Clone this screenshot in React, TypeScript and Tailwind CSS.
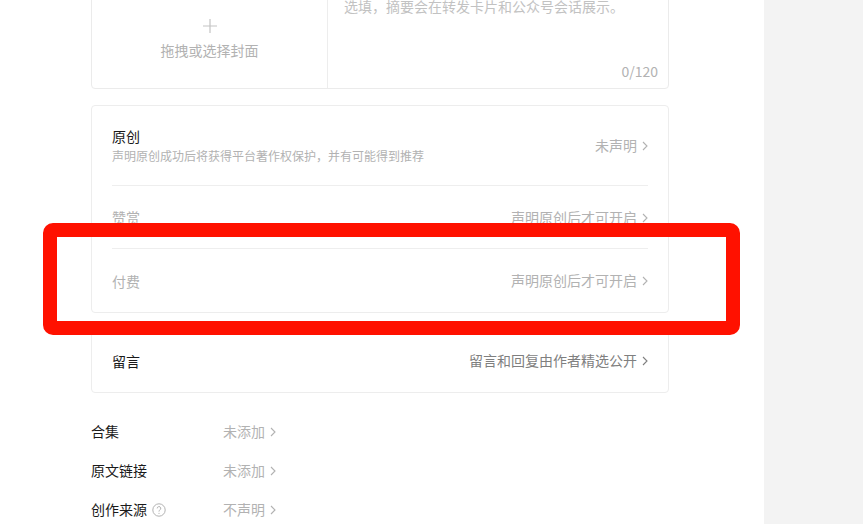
const FONT = '"Noto Sans CJK SC", "Noto Sans", sans-serif';

function Chevron({ className = "" }: { className?: string }) {
  return (
    <svg width="6" height="10" viewBox="0 0 6 10" className={className}>
      <path d="M1 1l4 4-4 4" fill="none" stroke="currentColor" strokeWidth="1.1" />
    </svg>
  );
}

function SettingRow({
  title,
  desc,
  value,
  disabled,
  valueDark,
  height,
}: {
  title: string;
  desc?: string;
  value: string;
  disabled?: boolean;
  valueDark?: boolean;
  height: string;
}) {
  return (
    <div className={`flex items-center justify-between ${height}`}>
      <div className="flex flex-col">
        <span className={`text-[14px] leading-[20px] ${disabled ? "text-[#b2b2b2]" : "text-[#1a1a1a]"}`}>
          {title}
        </span>
        {desc && <span className="text-[12px] leading-[18px] text-[#b2b2b2] mt-[1px]">{desc}</span>}
      </div>
      <div className={`flex items-center gap-[5px] text-[14px] ${valueDark ? "text-[#7f7f7f]" : "text-[#b2b2b2]"}`}>
        <span>{value}</span>
        <Chevron className="mt-[1px]" />
      </div>
    </div>
  );
}

export default function App() {
  return (
    <div className="relative flex w-full h-[524px] overflow-hidden bg-white" style={{ fontFamily: FONT }}>
      <div className="flex-1 bg-white">
        <div className="pl-[91px] w-[669px]">
          {/* Cover + summary */}
          <div className="-mt-[14px] flex h-[103px] border border-[#ebebeb] rounded-[4px]">
            <div className="w-[236px] pt-[2px] border-r border-[#ededed] flex flex-col items-center justify-center">
              <svg width="16" height="16" viewBox="0 0 16 16" className="text-[#c4c4c4]">
                <path d="M8 1v14M1 8h14" stroke="currentColor" strokeWidth="1.2" />
              </svg>
              <span className="mt-[6px] text-[14px] leading-[20px] text-[#b2b2b2]">拖拽或选择封面</span>
            </div>
            <div className="relative flex-1 pl-[16px] pt-[6px]">
              <span className="text-[14px] leading-[22px] text-[#c2c2c2]">选填，摘要会在转发卡片和公众号会话展示。</span>
              <span className="absolute right-[10px] bottom-[6px] text-[14px] leading-[22px] text-[#b2b2b2]">0/120</span>
            </div>
          </div>

          {/* Original / reward / pay */}
          <div className="mt-[16px] border border-[#ededed] rounded-[4px] px-[20px]">
            <SettingRow
              title="原创"
              desc="声明原创成功后将获得平台著作权保护，并有可能得到推荐"
              value="未声明"
              height="h-[79px]"
            />
            <div className="h-px bg-[#eeeeee]" />
            <SettingRow title="赞赏" value="声明原创后才可开启" disabled height="h-[62px]" />
            <div className="h-px bg-[#eeeeee]" />
            <SettingRow title="付费" value="声明原创后才可开启" disabled height="h-[63px]" />
          </div>

          {/* Comments */}
          <div className="mt-[15px] border border-[#ededed] rounded-[4px] px-[20px]">
            <SettingRow title="留言" value="留言和回复由作者精选公开" valueDark height="h-[63px]" />
          </div>

          {/* Plain rows */}
          <div className="mt-[19px] flex flex-col text-[14px]">
            {[
              { label: "合集", value: "未添加" },
              { label: "原文链接", value: "未添加" },
              { label: "创作来源", value: "不声明", help: true },
            ].map((r) => (
              <div key={r.label} className="flex items-center h-[39px]">
                <div className="w-[132px] flex items-center gap-[5px] text-[#1a1a1a]">
                  <span>{r.label}</span>
                  {r.help && (
                    <svg width="14" height="14" viewBox="0 0 14 14" className="text-[#b2b2b2]">
                      <circle cx="7" cy="7" r="6.2" fill="none" stroke="currentColor" strokeWidth="1" />
                      <path
                        d="M5.2 5.4a1.8 1.8 0 1 1 2.6 1.6c-.6.3-.8.6-.8 1.2v.4"
                        fill="none"
                        stroke="currentColor"
                        strokeWidth="1"
                      />
                      <circle cx="7" cy="10.3" r="0.6" fill="currentColor" />
                    </svg>
                  )}
                </div>
                <div className="flex items-center gap-[5px] text-[#b2b2b2]">
                  <span>{r.value}</span>
                  <Chevron className="mt-[1px]" />
                </div>
              </div>
            ))}
          </div>
        </div>
      </div>
      <div className="w-[99px] bg-[#f3f3f3]" />

      {/* Red highlight overlay */}
      <div className="absolute left-[43px] top-[223px] w-[697px] h-[112px] border-[14px] border-[#ff1100] rounded-[10px]" />
    </div>
  );
}
